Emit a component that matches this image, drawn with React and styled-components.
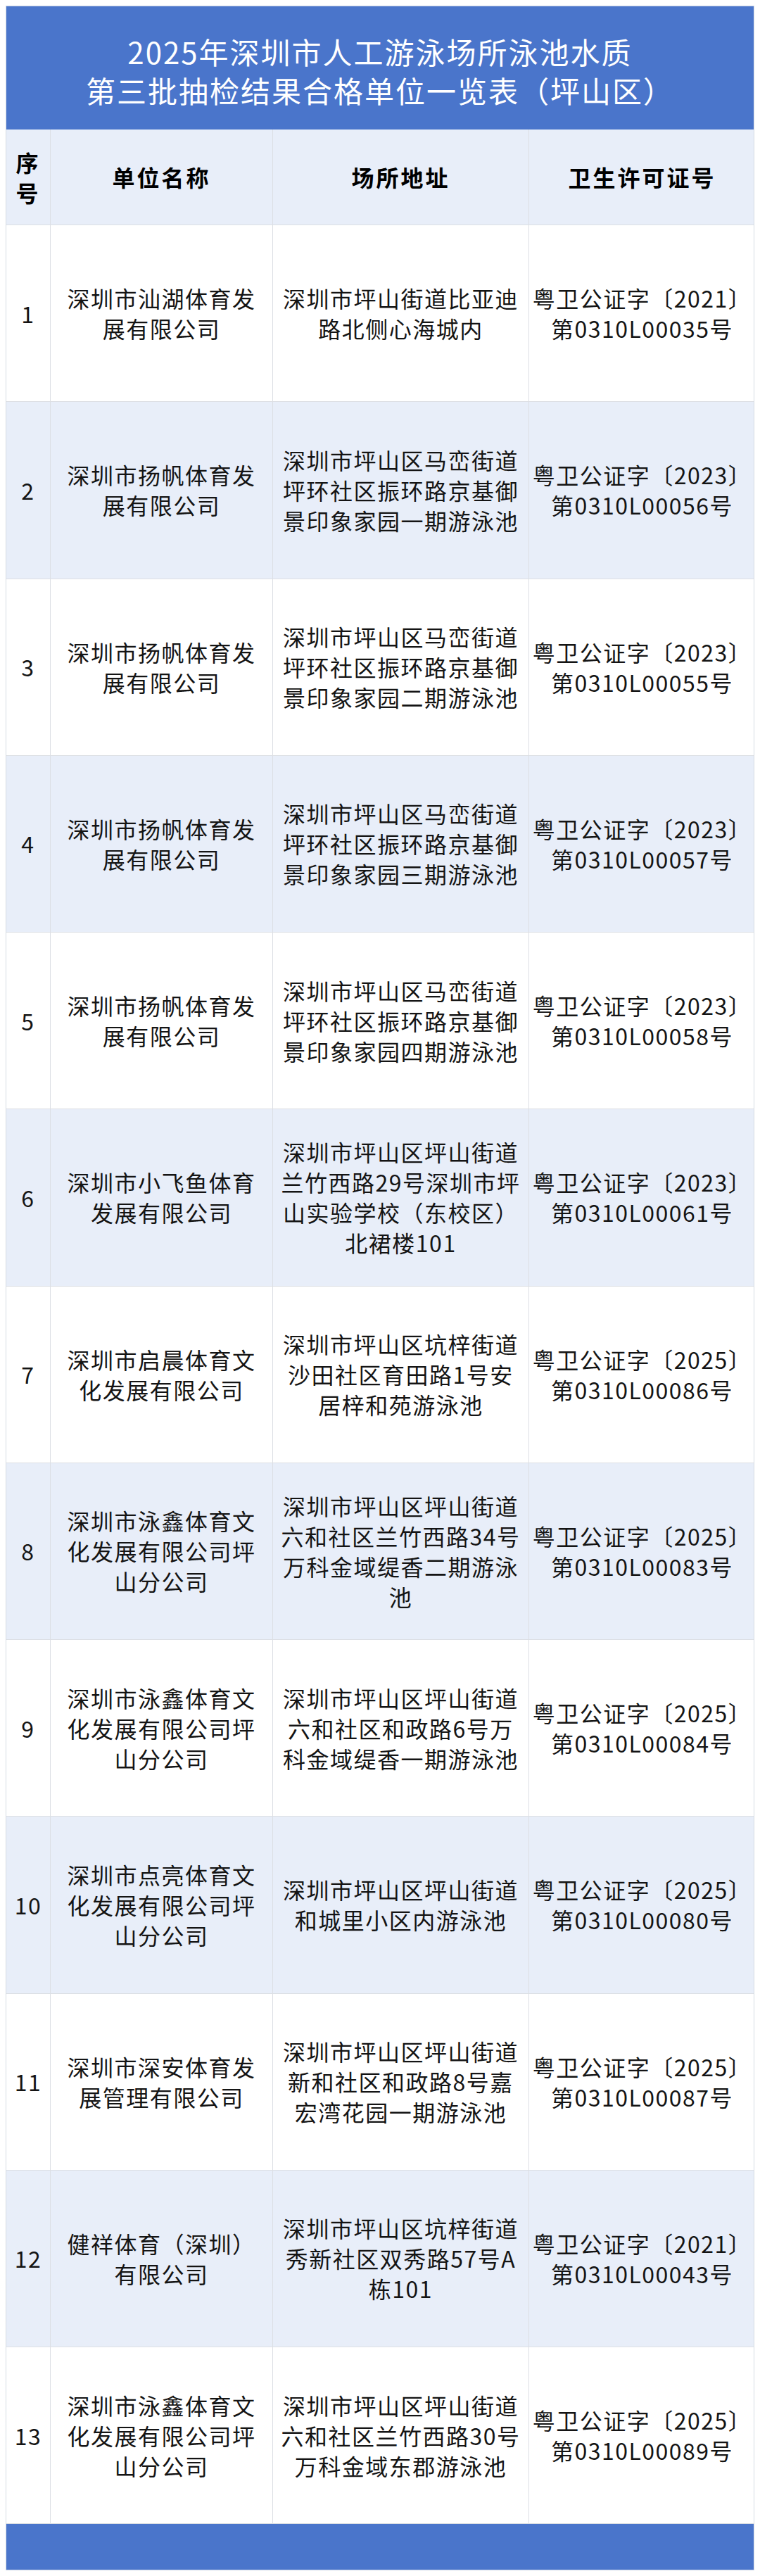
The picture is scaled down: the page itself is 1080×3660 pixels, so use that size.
import React from 'react';
import styled, { createGlobalStyle } from 'styled-components';

const GlobalStyle = createGlobalStyle`
  body {
    margin: 8px;
    background: #fff;
    font-family: "Noto Sans CJK SC", "Noto Sans", sans-serif;
  }
`;

const COLS = '63px 316px 364px 321px';

const Sheet = styled.div`
  width: 1064px;
  border-left: 1px solid #d6dbe3;
  border-right: 1px solid #d6dbe3;
  box-sizing: border-box;
`;

const TitleBar = styled.div`
  height: 176px;
  background: #4a75cb;
  border-top: 1px solid #c9d3e6;
  box-sizing: border-box;
  display: flex;
  align-items: center;
  justify-content: center;
  text-align: center;
  color: #fff;
  font-size: 42px;
  line-height: 55px;
  letter-spacing: 2px;
  padding-top: 6px;
`;

const Row = styled.div`
  display: grid;
  grid-template-columns: ${COLS};
  height: ${p => (p.$head ? '136px' : '251.25px')};
  background: ${p => (p.$tint ? '#e8eef9' : '#fff')};
  border-bottom: 1px solid #dcdfe4;
  box-sizing: border-box;
`;

const Cell = styled.div`
  display: flex;
  align-items: center;
  justify-content: center;
  text-align: center;
  border-right: 1px solid #dcdfe4;
  box-sizing: border-box;
  color: ${p => (p.$head ? '#000' : '#141414')};
  font-weight: ${p => (p.$head ? 700 : 400)};
  font-size: 32px;
  line-height: 43px;
  letter-spacing: ${p => (p.$head ? '3px' : '1.5px')};
  white-space: nowrap;
  &:last-child {
    border-right: none;
  }
`;

const Footer = styled.div`
  height: 66px;
  background: #4a75cb;
  border-bottom: 1px solid #c9d3e6;
  box-sizing: border-box;
`;

const rows = [
  [['深圳市汕湖体育发', '展有限公司'], ['深圳市坪山街道比亚迪', '路北侧心海城内'], '2021', '0035'],
  [['深圳市扬帆体育发', '展有限公司'], ['深圳市坪山区马峦街道', '坪环社区振环路京基御', '景印象家园一期游泳池'], '2023', '0056'],
  [['深圳市扬帆体育发', '展有限公司'], ['深圳市坪山区马峦街道', '坪环社区振环路京基御', '景印象家园二期游泳池'], '2023', '0055'],
  [['深圳市扬帆体育发', '展有限公司'], ['深圳市坪山区马峦街道', '坪环社区振环路京基御', '景印象家园三期游泳池'], '2023', '0057'],
  [['深圳市扬帆体育发', '展有限公司'], ['深圳市坪山区马峦街道', '坪环社区振环路京基御', '景印象家园四期游泳池'], '2023', '0058'],
  [['深圳市小飞鱼体育', '发展有限公司'], ['深圳市坪山区坪山街道', '兰竹西路29号深圳市坪', '山实验学校（东校区）', '北裙楼101'], '2023', '0061'],
  [['深圳市启晨体育文', '化发展有限公司'], ['深圳市坪山区坑梓街道', '沙田社区育田路1号安', '居梓和苑游泳池'], '2025', '0086'],
  [['深圳市泳鑫体育文', '化发展有限公司坪', '山分公司'], ['深圳市坪山区坪山街道', '六和社区兰竹西路34号', '万科金域缇香二期游泳', '池'], '2025', '0083'],
  [['深圳市泳鑫体育文', '化发展有限公司坪', '山分公司'], ['深圳市坪山区坪山街道', '六和社区和政路6号万', '科金域缇香一期游泳池'], '2025', '0084'],
  [['深圳市点亮体育文', '化发展有限公司坪', '山分公司'], ['深圳市坪山区坪山街道', '和城里小区内游泳池'], '2025', '0080'],
  [['深圳市深安体育发', '展管理有限公司'], ['深圳市坪山区坪山街道', '新和社区和政路8号嘉', '宏湾花园一期游泳池'], '2025', '0087'],
  [['健祥体育（深圳）', '有限公司'], ['深圳市坪山区坑梓街道', '秀新社区双秀路57号A', '栋101'], '2021', '0043'],
  [['深圳市泳鑫体育文', '化发展有限公司坪', '山分公司'], ['深圳市坪山区坪山街道', '六和社区兰竹西路30号', '万科金域东郡游泳池'], '2025', '0089'],
];

function Lines({ items }) {
  return items.map((t, i) => (
    <React.Fragment key={i}>
      {i > 0 && <br />}
      {t}
    </React.Fragment>
  ));
}

export default function App() {
  return (
    <>
      <GlobalStyle />
      <Sheet>
        <TitleBar>
          <div>
            2025年深圳市人工游泳场所泳池水质
            <br />
            第三批抽检结果合格单位一览表（坪山区）
          </div>
        </TitleBar>
        <Row $head $tint>
          <Cell $head><div>序<br />号</div></Cell>
          <Cell $head>单位名称</Cell>
          <Cell $head>场所地址</Cell>
          <Cell $head>卫生许可证号</Cell>
        </Row>
        {rows.map(([name, addr, year, code], i) => (
          <Row key={i} $tint={i % 2 === 1}>
            <Cell>{i + 1}</Cell>
            <Cell><div><Lines items={name} /></div></Cell>
            <Cell><div><Lines items={addr} /></div></Cell>
            <Cell>
              <div>
                <Lines items={[`粤卫公证字〔${year}〕`, `第0310L0${code}号`]} />
              </div>
            </Cell>
          </Row>
        ))}
        <Footer />
      </Sheet>
    </>
  );
}
